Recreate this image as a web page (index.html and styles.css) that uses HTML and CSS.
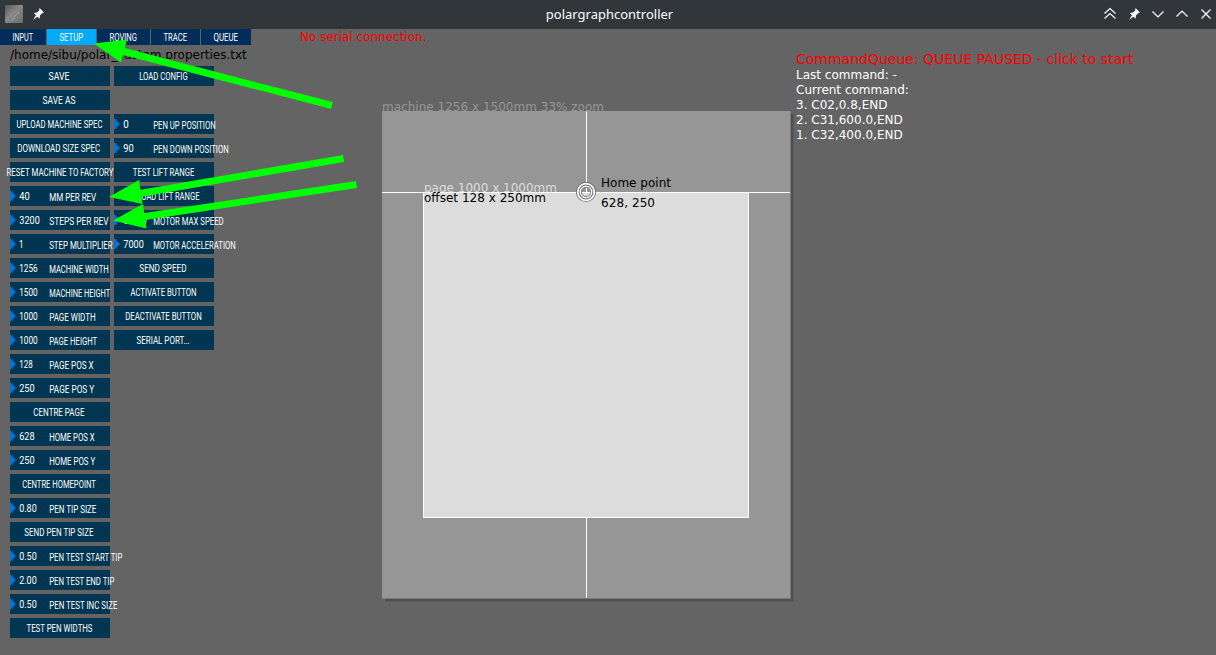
FILE: index.html
```
<!DOCTYPE html>
<html lang="en">
<head>
<meta charset="utf-8">
<title>polargraphcontroller</title>
<link rel="stylesheet" href="styles.css">
</head>
<body>
<div class="window">
  <header class="titlebar">
    <svg class="left-icons" width="50" height="29" viewBox="0 0 50 29">
      <defs><linearGradient id="app" x1="0" y1="0" x2="1" y2="1"><stop offset="0" stop-color="#555"/><stop offset=".45" stop-color="#888"/><stop offset="1" stop-color="#6c6c6c"/></linearGradient></defs>
      <rect x="5" y="5" width="18" height="18" rx="1" fill="url(#app)"/>
      <path d="M14 17l5-5M11 20l4-2" stroke="#aaa" stroke-width=".7"/>
      <path class="solid" d="M39.500 8l4.500 4.500-2 .8-2 2.200-.5 3.200-2-2-4.500 3 3-4.500-2.200-2.200 3.200-.5 2.200-2z"/>
    </svg>
    <h1 class="title">polargraphcontroller</h1>
    <svg class="right-icons" width="116" height="29" viewBox="1100 0 116 29">
      <path class="line" d="M1104.500 13.500l5.500-5 5.500 5M1104.500 18.500l5.500-5 5.500 5M1152.500 11.500l5.500 5.500 5.500-5.500M1176.500 16.500l5.500-5.500 5.500 5.500M1201.500 9.500l9 9M1210.500 9.500l-9 9"/>
      <path class="solid" d="M1135.500 8l4.500 4.500-2 .8-2 2.200-.5 3.200-2-2-4.500 3 3-4.500-2.200-2.200 3.200-.5 2.200-2z"/>
    </svg>
  </header>
  <main class="stage">
    <aside class="panel">
      <nav class="tabs">
        <svg class="tab t46"><text x="12.500" y="12" textLength="20.500" lengthAdjust="spacingAndGlyphs">INPUT</text></svg>
        <svg class="tab t49 active"><text x="12.500" y="12" textLength="23.500" lengthAdjust="spacingAndGlyphs">SETUP</text></svg>
        <svg class="tab t53"><text x="12.500" y="12" textLength="27.500" lengthAdjust="spacingAndGlyphs">ROVING</text></svg>
        <svg class="tab t49"><text x="12.500" y="12" textLength="23.500" lengthAdjust="spacingAndGlyphs">TRACE</text></svg>
        <svg class="tab t50"><text x="12.500" y="12" textLength="24.500" lengthAdjust="spacingAndGlyphs">QUEUE</text></svg>
      </nav>
      <p class="path">/home/sibu/polar_custom.properties.txt</p>
      <div class="columns">
        <div class="column">
          <svg class="control"><text x="38.500" y="14" textLength="21" lengthAdjust="spacingAndGlyphs">SAVE</text></svg>
          <svg class="control"><text x="32.500" y="14" textLength="33" lengthAdjust="spacingAndGlyphs">SAVE AS</text></svg>
          <svg class="control"><text x="6.500" y="14" textLength="86" lengthAdjust="spacingAndGlyphs">UPLOAD MACHINE SPEC</text></svg>
          <svg class="control"><text x="7.200" y="14" textLength="83" lengthAdjust="spacingAndGlyphs">DOWNLOAD SIZE SPEC</text></svg>
          <svg class="control"><text x="-3.500" y="14" textLength="107" lengthAdjust="spacingAndGlyphs">RESET MACHINE TO FACTORY</text></svg>
          <svg class="control"><path d="M0 4l6 6-6 6z"/><text x="9.300" y="14" textLength="10.500" lengthAdjust="spacingAndGlyphs">40</text><text x="39.200" y="15" textLength="47" lengthAdjust="spacingAndGlyphs">MM PER REV</text></svg>
          <svg class="control"><path d="M0 4l6 6-6 6z"/><text x="9.300" y="14" textLength="20.500" lengthAdjust="spacingAndGlyphs">3200</text><text x="39.200" y="15" textLength="59.500" lengthAdjust="spacingAndGlyphs">STEPS PER REV</text></svg>
          <svg class="control"><path d="M0 4l6 6-6 6z"/><text x="9" y="14" textLength="4.500" lengthAdjust="spacingAndGlyphs">1</text><text x="39.200" y="15" textLength="63.500" lengthAdjust="spacingAndGlyphs">STEP MULTIPLIER</text></svg>
          <svg class="control"><path d="M0 4l6 6-6 6z"/><text x="9.200" y="14" textLength="18.500" lengthAdjust="spacingAndGlyphs">1256</text><text x="39.200" y="15" textLength="59.500" lengthAdjust="spacingAndGlyphs">MACHINE WIDTH</text></svg>
          <svg class="control"><path d="M0 4l6 6-6 6z"/><text x="9.200" y="14" textLength="18.500" lengthAdjust="spacingAndGlyphs">1500</text><text x="39.200" y="15" textLength="61" lengthAdjust="spacingAndGlyphs">MACHINE HEIGHT</text></svg>
          <svg class="control"><path d="M0 4l6 6-6 6z"/><text x="9.200" y="14" textLength="18.500" lengthAdjust="spacingAndGlyphs">1000</text><text x="39.200" y="15" textLength="46.500" lengthAdjust="spacingAndGlyphs">PAGE WIDTH</text></svg>
          <svg class="control"><path d="M0 4l6 6-6 6z"/><text x="9.200" y="14" textLength="18.500" lengthAdjust="spacingAndGlyphs">1000</text><text x="39.200" y="15" textLength="48" lengthAdjust="spacingAndGlyphs">PAGE HEIGHT</text></svg>
          <svg class="control"><path d="M0 4l6 6-6 6z"/><text x="9.200" y="14" textLength="13.500" lengthAdjust="spacingAndGlyphs">128</text><text x="39.200" y="15" textLength="44.500" lengthAdjust="spacingAndGlyphs">PAGE POS X</text></svg>
          <svg class="control"><path d="M0 4l6 6-6 6z"/><text x="9.200" y="14" textLength="15.500" lengthAdjust="spacingAndGlyphs">250</text><text x="39.200" y="15" textLength="45" lengthAdjust="spacingAndGlyphs">PAGE POS Y</text></svg>
          <svg class="control"><text x="23.300" y="14" textLength="51.200" lengthAdjust="spacingAndGlyphs">CENTRE PAGE</text></svg>
          <svg class="control"><path d="M0 4l6 6-6 6z"/><text x="9.200" y="14" textLength="15.500" lengthAdjust="spacingAndGlyphs">628</text><text x="39.200" y="15" textLength="45.500" lengthAdjust="spacingAndGlyphs">HOME POS X</text></svg>
          <svg class="control"><path d="M0 4l6 6-6 6z"/><text x="9.200" y="14" textLength="15.500" lengthAdjust="spacingAndGlyphs">250</text><text x="39.200" y="15" textLength="46" lengthAdjust="spacingAndGlyphs">HOME POS Y</text></svg>
          <svg class="control"><text x="12.300" y="14" textLength="73.500" lengthAdjust="spacingAndGlyphs">CENTRE HOMEPOINT</text></svg>
          <svg class="control"><path d="M0 4l6 6-6 6z"/><text x="9.200" y="14" textLength="17.500" lengthAdjust="spacingAndGlyphs">0.80</text><text x="39.200" y="15" textLength="47.200" lengthAdjust="spacingAndGlyphs">PEN TIP SIZE</text></svg>
          <svg class="control"><text x="14.300" y="14" textLength="69.200" lengthAdjust="spacingAndGlyphs">SEND PEN TIP SIZE</text></svg>
          <svg class="control"><path d="M0 4l6 6-6 6z"/><text x="9.200" y="14" textLength="17.500" lengthAdjust="spacingAndGlyphs">0.50</text><text x="39.200" y="15" textLength="73.200" lengthAdjust="spacingAndGlyphs">PEN TEST START TIP</text></svg>
          <svg class="control"><path d="M0 4l6 6-6 6z"/><text x="9.200" y="14" textLength="17.500" lengthAdjust="spacingAndGlyphs">2.00</text><text x="39.200" y="15" textLength="65.200" lengthAdjust="spacingAndGlyphs">PEN TEST END TIP</text></svg>
          <svg class="control"><path d="M0 4l6 6-6 6z"/><text x="9.200" y="14" textLength="17.500" lengthAdjust="spacingAndGlyphs">0.50</text><text x="39.200" y="15" textLength="68.200" lengthAdjust="spacingAndGlyphs">PEN TEST INC SIZE</text></svg>
          <svg class="control"><text x="16.500" y="14" textLength="66" lengthAdjust="spacingAndGlyphs">TEST PEN WIDTHS</text></svg>
        </div>
        <div class="column">
          <svg class="control"><text x="25.200" y="14" textLength="48.500" lengthAdjust="spacingAndGlyphs">LOAD CONFIG</text></svg>
          <div class="gap"></div>
          <svg class="control"><path d="M0 4l6 6-6 6z"/><text x="9.300" y="14" textLength="5.500" lengthAdjust="spacingAndGlyphs">0</text><text x="39.200" y="15" textLength="62.500" lengthAdjust="spacingAndGlyphs">PEN UP POSITION</text></svg>
          <svg class="control"><path d="M0 4l6 6-6 6z"/><text x="9.300" y="14" textLength="10.500" lengthAdjust="spacingAndGlyphs">90</text><text x="39.200" y="15" textLength="75.500" lengthAdjust="spacingAndGlyphs">PEN DOWN POSITION</text></svg>
          <svg class="control"><text x="18.800" y="14" textLength="61.500" lengthAdjust="spacingAndGlyphs">TEST LIFT RANGE</text></svg>
          <svg class="control"><text x="13.700" y="14" textLength="71.800" lengthAdjust="spacingAndGlyphs">UPLOAD LIFT RANGE</text></svg>
          <svg class="control"><path d="M0 4l6 6-6 6z"/><text x="9.300" y="14" textLength="23.500" lengthAdjust="spacingAndGlyphs">600.0</text><text x="39.200" y="15" textLength="70.500" lengthAdjust="spacingAndGlyphs">MOTOR MAX SPEED</text></svg>
          <svg class="control"><path d="M0 4l6 6-6 6z"/><text x="9.300" y="14" textLength="20.500" lengthAdjust="spacingAndGlyphs">7000</text><text x="39.200" y="15" textLength="82.500" lengthAdjust="spacingAndGlyphs">MOTOR ACCELERATION</text></svg>
          <svg class="control"><text x="25.300" y="14" textLength="47.200" lengthAdjust="spacingAndGlyphs">SEND SPEED</text></svg>
          <svg class="control"><text x="16.500" y="14" textLength="66" lengthAdjust="spacingAndGlyphs">ACTIVATE BUTTON</text></svg>
          <svg class="control"><text x="11.200" y="14" textLength="76.500" lengthAdjust="spacingAndGlyphs">DEACTIVATE BUTTON</text></svg>
          <svg class="control"><text x="22.500" y="14" textLength="53.200" lengthAdjust="spacingAndGlyphs">SERIAL PORT...</text></svg>
        </div>
      </div>
    </aside>
    <p class="serial">No serial connection.</p>
    <svg class="machine" width="430" height="520" viewBox="370 90 430 520">
      <rect x="385" y="114" width="409" height="488" fill="#5b5b5b"/>
      <rect x="385" y="114" width="408" height="487" fill="#505050"/>
      <rect x="382" y="111" width="409" height="488" fill="#787878"/>
      <rect x="382" y="111" width="408" height="487" fill="#969696"/>
      <text x="382" y="111" fill="#969696" textLength="222">machine 1256 x 1500mm 33% zoom</text>
      <path class="guide" d="M586.500 111v487M382 192.500h408"/>
      <rect x="423.500" y="192.500" width="325" height="325" fill="#dcdcdc" stroke="#fff"/>
      <text x="424" y="192" fill="#dcdcdc" textLength="133">page 1000 x 1000mm</text>
      <text x="424" y="202" textLength="122">offset 128 x 250mm</text>
      <path class="guide" d="M586.500 183v9"/>
      <circle cx="586" cy="192" r="7.300" fill="none" stroke="#646464" stroke-width="5.400"/>
      <circle cx="586" cy="192" r="8.300" fill="none" stroke="#fff" stroke-width="1.800"/>
      <circle cx="586" cy="192" r="5.700" fill="none" stroke="#fff" stroke-width="1.500"/>
      <circle cx="586" cy="192" r="4.600" fill="none" stroke="#787878" stroke-width=".8"/>
      <text x="601" y="187" textLength="70">Home point</text>
      <text x="601" y="207" textLength="54">628, 250</text>
    </svg>
    <section class="queue">
      <h2>CommandQueue: QUEUE PAUSED - click to start</h2>
      <p>Last command: -</p>
      <p>Current command:</p>
      <p>3. C02,0.8,END</p>
      <p>2. C31,600.0,END</p>
      <p>1. C32,400.0,END</p>
    </section>
  </main>
  <svg class="arrows" width="370" height="240" viewBox="0 0 370 240">
    <path class="shaft" d="M332 105.500L122 51M343.500 158.500L140 193.500M356.500 184.500L142 217"/>
    <path class="head" d="M94 43.500L127 39.500 121 62.500zM109 197L139 180 142.500 204zM113 220.500L143 204 146.500 228.500z"/>
  </svg>
</div>
</body>
</html>
```
FILE: styles.css
```
* { box-sizing: border-box; }
body { margin: 0; background: #646464; font-family: "DejaVu Sans", sans-serif; font-size: 12px; color: #000; }
h1, h2, p { margin: 0; font-weight: normal; }
svg { display: block; flex: none; }
.window { position: relative; width: 1216px; height: 655px; overflow: hidden; }
.titlebar { display: flex; align-items: center; justify-content: space-between; height: 29px; background: #31363b; }
.left-icons { margin-right: 69px; }
.title { font-family: "Noto Sans", sans-serif; font-size: 13px; line-height: 29px; color: #fcfcfc; }
.solid { fill: #fcfcfc; }
.line { fill: none; stroke: #fcfcfc; stroke-width: 1.200; }
.stage { display: flex; align-items: flex-start; height: 626px; }
.panel { width: 300px; }
.tabs { display: flex; gap: 1px; }
.tab { height: 16px; background: #002d5a; }
.tab.active { background: #00aaff; }
.t46 { width: 46px; }
.t49 { width: 49px; }
.t50 { width: 50px; }
.t53 { width: 53px; }
.tab text, .control text { font-family: Roboto, sans-serif; font-size: 10px; fill: #fff; }
.path { height: 21px; padding-left: 10px; line-height: 20px; letter-spacing: -0.01px; white-space: nowrap; }
.columns { display: flex; gap: 4px; padding-left: 10px; }
.column { display: grid; gap: 4px; align-content: start; }
.control { width: 100px; height: 20px; background: #003652; overflow: visible; }
.control path { fill: #0074d9; }
.gap { height: 20px; }
.serial { width: 70px; line-height: 16px; color: #f00; white-space: nowrap; }
.machine { margin-top: 61px; }
.machine text { font-size: 12px; }
.guide { fill: none; stroke: #fff; }
.queue { margin: 22px 0 0 -4px; line-height: 15px; color: #fff; white-space: nowrap; }
.queue h2 { font-size: 14px; line-height: 17px; color: #f00; }
.arrows { position: absolute; left: 0; top: 0; }
.shaft { fill: none; stroke: #0f0; stroke-width: 7; }
.head { fill: #0f0; }
```
